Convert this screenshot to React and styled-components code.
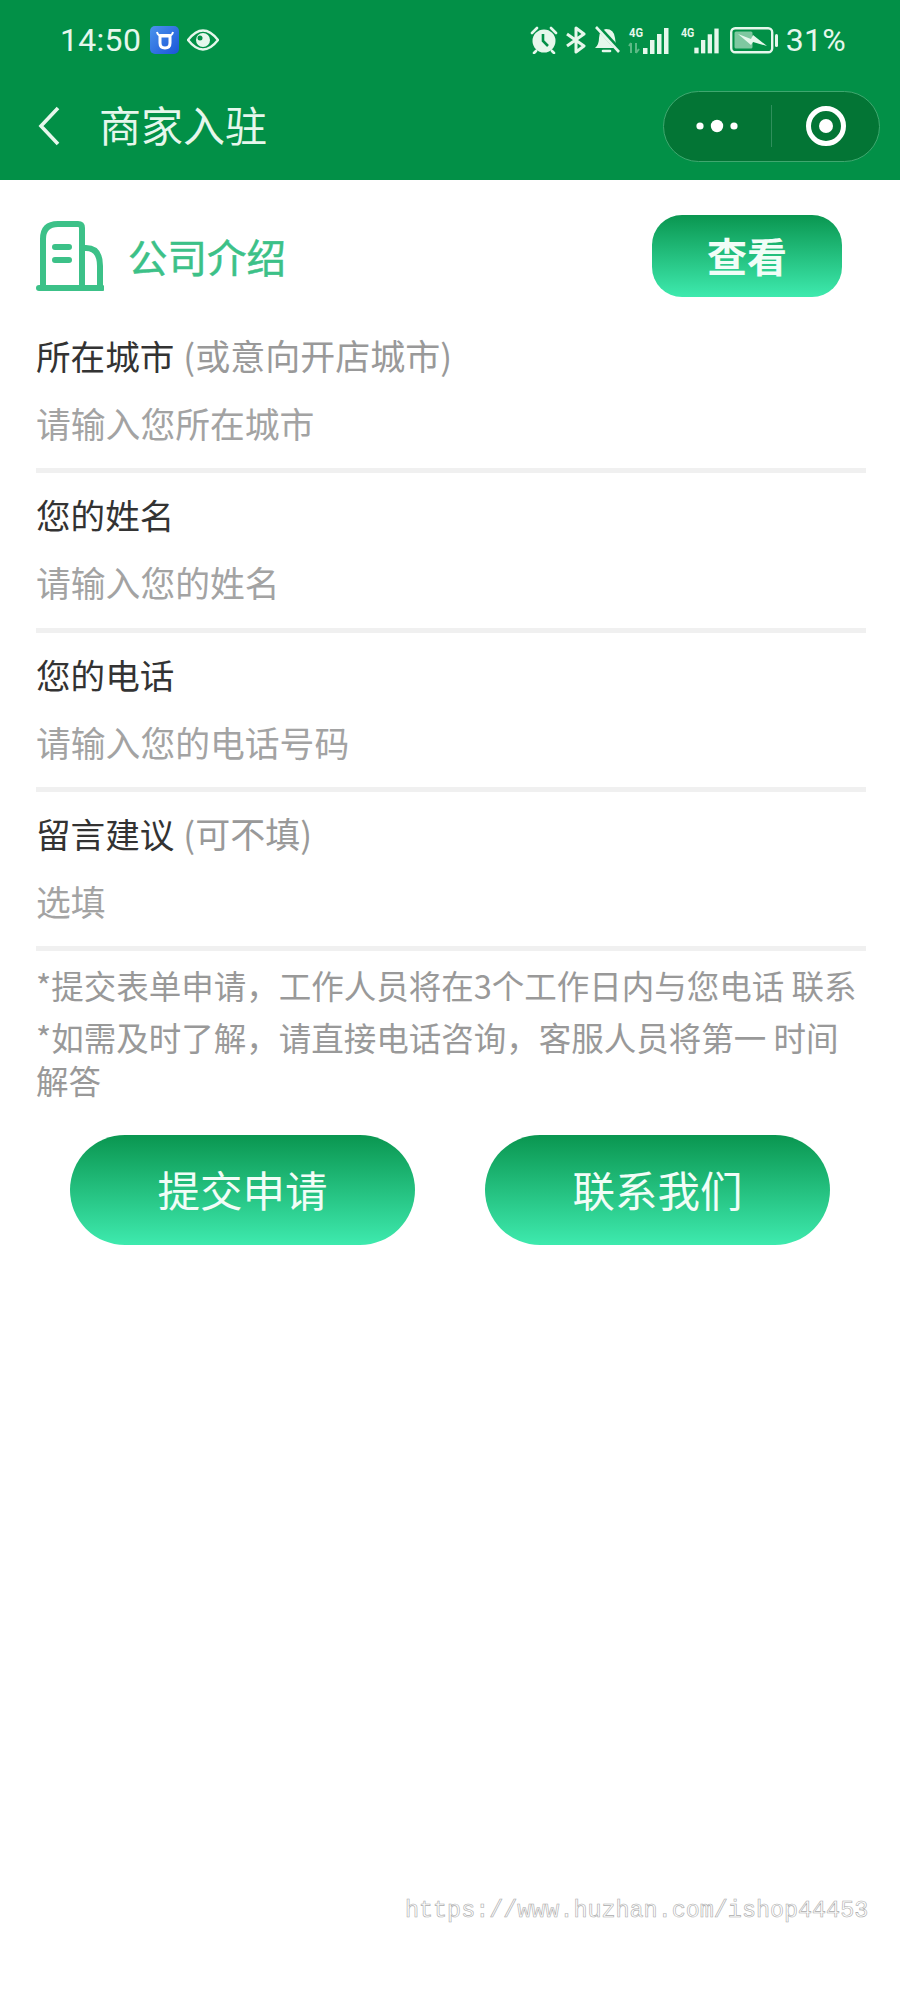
import React from 'react';
import styled, { createGlobalStyle } from 'styled-components';

const GlobalStyle = createGlobalStyle`
  html, body {
    margin: 0;
    padding: 0;
    background: #fff;
  }
  * {
    box-sizing: border-box;
  }
`;

const cjk = `"Noto Sans CJK SC", "Noto Sans", sans-serif`;
const onGreen = '#e6f7ec';

const Page = styled.div`
  position: relative;
  width: 900px;
  height: 2000px;
  background: #fff;
  font-family: ${cjk};
  overflow: hidden;
`;

const Top = styled.header`
  background: #029047;
  height: 180px;
`;

const StatusBar = styled.div`
  height: 80px;
  padding: 0 54px 0 60px;
  display: flex;
  align-items: center;
  justify-content: space-between;
  color: ${onGreen};
`;

const StatusGroup = styled.div`
  display: flex;
  align-items: center;
  gap: 8px;
`;

const StatusText = styled.span`
  font-family: Roboto, "Liberation Sans", sans-serif;
  font-size: 32px;
  line-height: 40px;
  letter-spacing: 0.3px;
`;

const AppBadge = styled.span`
  width: 29px;
  height: 28px;
  margin-left: 1px;
  border-radius: 5px;
  background: linear-gradient(135deg, #4b93ec, #1a55d8);
  display: flex;
  align-items: center;
  justify-content: center;
`;

const NavBar = styled.div`
  height: 100px;
  padding: 0 20px 8px 38px;
  display: flex;
  align-items: center;
`;

const NavTitle = styled.h1`
  flex: 1;
  margin: -4px 0 0 39px;
  color: ${onGreen};
  font-size: 42px;
  font-weight: 400;
  line-height: 60px;
`;

const Capsule = styled.div`
  width: 217px;
  height: 71px;
  border: 1.5px solid #3fa76f;
  border-radius: 36px;
  background: #037535;
  display: flex;
  align-items: center;
`;

const CapsulePart = styled.div`
  flex: 1;
  height: 42px;
  display: flex;
  align-items: center;
  justify-content: center;
  border-left: ${props => (props.$divided ? '1px solid #2f8f5c' : 'none')};
`;

const Form = styled.main`
  padding: 0 34px 0 36px;
`;

const IntroRow = styled.section`
  display: flex;
  align-items: center;
  padding: 35px 24px 17px 0;
`;

const IntroTitle = styled.h2`
  flex: 1;
  margin: 0 0 0 24px;
  color: #3cc188;
  font-size: 39.5px;
  font-weight: 400;
  line-height: 56px;
  -webkit-text-stroke: 0.5px #3cc188;
`;

const GradientButton = styled.button`
  border: none;
  color: #f1fdf7;
  font-family: ${cjk};
  background: linear-gradient(180deg, #0a9650 0%, #3eeaae 100%);
  cursor: pointer;
`;

const ViewButton = styled(GradientButton)`
  width: 190px;
  height: 82px;
  padding: 0 0 2px;
  border-radius: 30px;
  font-size: 40px;
  font-weight: 700;
`;

const Field = styled.div`
  height: 159.33px;
  padding-top: 19px;
  border-bottom: 5px solid #f0f0f0;
`;

const FieldLabel = styled.label`
  display: block;
  color: #333;
  font-size: 34.6px;
  line-height: 44px;
`;

const LabelHint = styled.span`
  margin-left: 9px;
  color: #999;
  font-size: 35px;
`;

const FieldInput = styled.input`
  display: block;
  width: 100%;
  height: 56px;
  margin-top: 18px;
  padding: 0;
  border: none;
  outline: none;
  background: transparent;
  color: #333;
  font-family: ${cjk};
  font-size: 34.8px;

  &::placeholder {
    color: #a3a3a3;
    opacity: 1;
  }
`;

const Notes = styled.div`
  margin-top: 12px;
  color: #999;
  font-size: 32.5px;
  line-height: 43px;
`;

const Note = styled.p`
  margin: 0 0 9px;
`;

const Actions = styled.div`
  display: flex;
  gap: 70px;
  margin-top: 34px;
  padding-left: 34px;
`;

const ActionButton = styled(GradientButton)`
  width: 345px;
  height: 110px;
  padding: 0 0 4px;
  border-radius: 55px;
  font-size: 42.5px;
  font-weight: 400;
`;

const Watermark = styled.div`
  position: absolute;
  left: 405px;
  top: 1895px;
  color: #fff;
  font-family: "Liberation Mono", monospace;
  font-size: 23.4px;
  line-height: 32px;
  white-space: nowrap;
  -webkit-text-stroke: 0.6px #ababab;
`;

const BullIcon = () => (
  <svg width="20" height="20" viewBox="0 0 20 20" fill="none" stroke="#fff">
    <path d="M2 2 Q3 6 6 5 H14 Q17 6 18 2" strokeWidth="2" />
    <path d="M5 6 H15 V13 Q15 18 10 18 Q5 18 5 13 Z" strokeWidth="3" />
  </svg>
);

const EyeIcon = () => (
  <svg width="32" height="22" viewBox="0 0 32 22">
    <path d="M1 11 Q16 -8 31 11 Q16 30 1 11 Z" fill="none" stroke={onGreen} strokeWidth="2.4" />
    <circle cx="16" cy="11" r="7" fill={onGreen} />
    <circle cx="13" cy="9" r="2.5" fill="#029047" />
  </svg>
);

const AlarmIcon = () => (
  <svg width="28" height="28" viewBox="0 0 28 28">
    <circle cx="14" cy="15" r="11.5" fill={onGreen} />
    <path d="M13 8 V15 L18 20" fill="none" stroke="#029047" strokeWidth="2.6" />
    <path d="M2 7 L7 2 M21 2 L26 7 M6 25 L4 27 M22 25 L24 27" stroke={onGreen} strokeWidth="2.6" strokeLinecap="round" />
  </svg>
);

const BluetoothIcon = () => (
  <svg width="20" height="28" viewBox="0 0 20 28" fill="none" stroke={onGreen} strokeWidth="3">
    <path d="M1 8 L18 20 L10 26 V2 L18 8 L1 20" strokeLinejoin="round" />
  </svg>
);

const MutedBellIcon = () => (
  <svg width="26" height="28" viewBox="0 0 26 28">
    <path d="M1 22 Q5 19 5 12 Q5 4 12 3 Q20 3 21 12 L22 19 L25 22 Z" fill={onGreen} />
    <path d="M9 25 H16" stroke={onGreen} strokeWidth="2.6" strokeLinecap="round" />
    <path d="M3 0 L26 25" stroke="#029047" strokeWidth="5" />
    <path d="M2 1 L25 26" stroke={onGreen} strokeWidth="2.6" />
  </svg>
);

const SignalIcon = ({ arrows }) => (
  <svg width={arrows ? 44 : 42} height="28" viewBox="0 0 44 28">
    <text x="1" y="11" fill={onGreen} fontFamily="Roboto, sans-serif" fontWeight="700" fontSize="13" textLength="14" lengthAdjust="spacingAndGlyphs">4G</text>
    {arrows && <path d="M3 27 V17 M8 17 V27 M11 23 L8 27 M1 20 L3 17" stroke="#5cb985" strokeWidth="2" fill="none" />}
    <rect x="15" y="22" width="4.5" height="6" fill={onGreen} />
    <rect x="22" y="14" width="4.5" height="14" fill={onGreen} />
    <rect x="29" y="8" width="4.5" height="20" fill={onGreen} />
    <rect x="36" y="2" width="4.5" height="26" fill={onGreen} />
  </svg>
);

const BatteryIcon = () => (
  <svg width="48" height="28" viewBox="0 0 48 28">
    <rect x="1.2" y="2.2" width="41" height="24" rx="4" fill="none" stroke={onGreen} strokeWidth="2.4" />
    <rect x="4.5" y="5.5" width="18" height="17" rx="1.5" fill="#7fc8a0" />
    <path d="M8 8 L21 13 L23 9 L37 20 L23 16 L21 19 Z" fill={onGreen} />
    <rect x="45" y="8" width="3" height="13" rx="1.5" fill={onGreen} />
  </svg>
);

const BackIcon = () => (
  <svg width="22" height="40" viewBox="0 0 22 40" fill="none" stroke={onGreen} strokeWidth="3.6">
    <path d="M20 2 L3 20 L20 38" />
  </svg>
);

const MoreIcon = () => (
  <svg width="44" height="14" viewBox="0 0 44 14" fill="#fff">
    <circle cx="4" cy="7" r="3.6" />
    <circle cx="21" cy="7" r="6.2" />
    <circle cx="38" cy="7" r="3.6" />
  </svg>
);

const TargetIcon = () => (
  <svg width="40" height="40" viewBox="0 0 40 40">
    <circle cx="20" cy="20" r="17.5" fill="none" stroke="#fff" strokeWidth="5" />
    <circle cx="20" cy="20" r="7" fill="#fff" />
  </svg>
);

const BuildingIcon = () => (
  <svg width="68" height="70" viewBox="0 0 68 70" fill="none" stroke="#3cc188" strokeWidth="6" strokeLinecap="round">
    <path d="M7 66 V18 Q7 3 22 3 H42 Q46 3 46 7 V66" />
    <path d="M46 27 H50 Q64 27 64 45 V66" />
    <path d="M3 67 H66" />
    <path d="M19 26 H33 M19 39 H33" />
  </svg>
);

const fields = [
  { label: '所在城市', hint: '(或意向开店城市)', placeholder: '请输入您所在城市' },
  { label: '您的姓名', placeholder: '请输入您的姓名' },
  { label: '您的电话', placeholder: '请输入您的电话号码' },
  { label: '留言建议', hint: '(可不填)', placeholder: '选填' },
];

const App = () => (
  <Page>
    <GlobalStyle />
    <Top>
      <StatusBar>
        <StatusGroup>
          <StatusText>14:50</StatusText>
          <AppBadge><BullIcon /></AppBadge>
          <EyeIcon />
        </StatusGroup>
        <StatusGroup>
          <AlarmIcon />
          <BluetoothIcon />
          <MutedBellIcon />
          <SignalIcon arrows />
          <SignalIcon />
          <BatteryIcon />
          <StatusText>31%</StatusText>
        </StatusGroup>
      </StatusBar>
      <NavBar>
        <BackIcon />
        <NavTitle>商家入驻</NavTitle>
        <Capsule>
          <CapsulePart><MoreIcon /></CapsulePart>
          <CapsulePart $divided><TargetIcon /></CapsulePart>
        </Capsule>
      </NavBar>
    </Top>
    <Form>
      <IntroRow>
        <BuildingIcon />
        <IntroTitle>公司介绍</IntroTitle>
        <ViewButton>查看</ViewButton>
      </IntroRow>
      {fields.map(field => (
        <Field key={field.label}>
          <FieldLabel>
            {field.label}
            {field.hint && <LabelHint>{field.hint}</LabelHint>}
          </FieldLabel>
          <FieldInput placeholder={field.placeholder} />
        </Field>
      ))}
      <Notes>
        <Note>*提交表单申请，工作人员将在3个工作日内与您电话 联系</Note>
        <Note>*如需及时了解，请直接电话咨询，客服人员将第一 时间解答</Note>
      </Notes>
      <Actions>
        <ActionButton>提交申请</ActionButton>
        <ActionButton>联系我们</ActionButton>
      </Actions>
    </Form>
    <Watermark>https://www.huzhan.com/ishop44453</Watermark>
  </Page>
);

export default App;
